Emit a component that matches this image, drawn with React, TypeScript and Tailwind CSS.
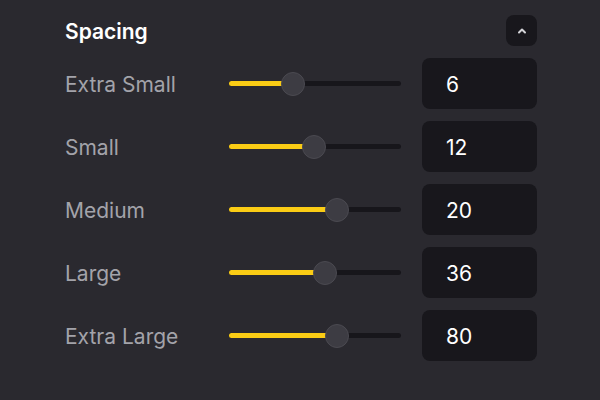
import React from 'react';

type Row = { label: string; value: number; pos: number };

// pos = thumb centre, in px from the track's left edge
const rows: Row[] = [
  { label: 'Extra Small', value: 6, pos: 64 },
  { label: 'Small', value: 12, pos: 85 },
  { label: 'Medium', value: 20, pos: 108 },
  { label: 'Large', value: 36, pos: 96 },
  { label: 'Extra Large', value: 80, pos: 108 },
];

const Slider = ({ pos }: { pos: number }) => (
  <div className="relative w-[172px] h-[5px] rounded-full bg-[#17161b]">
    <div className="absolute left-0 top-0 h-full rounded-full bg-[#facc15]" style={{ width: pos }} />
    <div
      className="absolute top-1/2 w-6 h-6 -translate-x-1/2 -translate-y-1/2 rounded-full bg-[#3d3c43] border border-[#4b4a51]"
      style={{ left: pos }}
    />
  </div>
);

export default function App() {
  return (
    <div
      className="w-[600px] h-[400px] bg-[#2a292f] pl-[65px] pt-[15px]"
      style={{ fontFamily: 'Inter, "Noto Sans", sans-serif' }}
    >
      <div className="w-[472px] flex flex-col gap-3">
        <div className="flex items-center justify-between h-[31px]">
          <span className="text-[21px] font-semibold text-white pt-[3px]">Spacing</span>
          <button className="w-[31px] h-[31px] rounded-lg bg-[#18171c] flex items-center justify-center">
            <svg width="10" height="10" viewBox="0 0 10 10" fill="none">
              <path d="M2 6.5 L5 3.5 L8 6.5" stroke="#d4d4d8" strokeWidth="2" strokeLinecap="round" strokeLinejoin="round" />
            </svg>
          </button>
        </div>
        {rows.map((r) => (
          <div key={r.label} className="flex items-center h-[51px]">
            <span className="w-[164px] text-[21px] text-[#a3a3aa] pt-[2px]">{r.label}</span>
            <Slider pos={r.pos} />
            <div className="ml-auto w-[115px] h-full rounded-lg bg-[#18171c] flex items-center pl-6 pt-[2px] text-[21px] text-white">
              {r.value}
            </div>
          </div>
        ))}
      </div>
    </div>
  );
}
